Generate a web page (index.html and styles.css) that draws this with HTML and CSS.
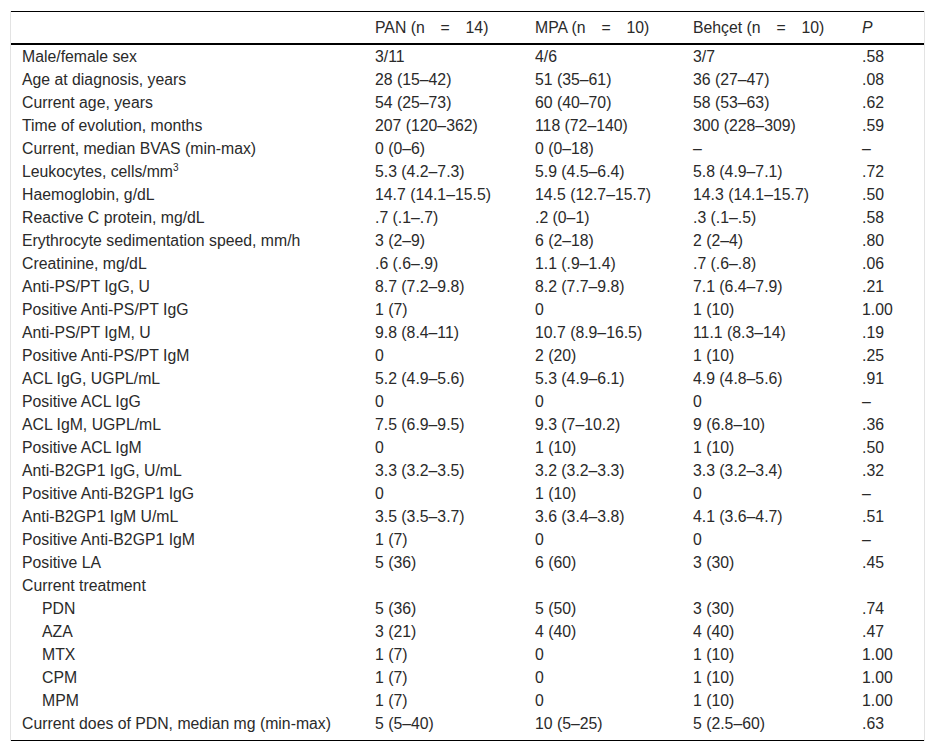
FILE: index.html
```html
<!DOCTYPE html>
<html>
<head>
<meta charset="utf-8">
<link rel="stylesheet" href="styles.css">
</head>
<body>
<div class="wrap">
<table class="data">
<thead>
<tr>
<th class="c-label"></th>
<th class="c-pan">PAN (n&emsp;=&emsp;14)</th>
<th class="c-mpa">MPA (n&emsp;=&emsp;10)</th>
<th class="c-beh">Behçet (n&emsp;=&emsp;10)</th>
<th class="c-p"><i>P</i></th>
</tr>
</thead>
<tbody>
<tr><td>Male/female sex</td><td>3/11</td><td>4/6</td><td>3/7</td><td>.58</td></tr>
<tr><td>Age at diagnosis, years</td><td>28 (15–42)</td><td>51 (35–61)</td><td>36 (27–47)</td><td>.08</td></tr>
<tr><td>Current age, years</td><td>54 (25–73)</td><td>60 (40–70)</td><td>58 (53–63)</td><td>.62</td></tr>
<tr><td>Time of evolution, months</td><td>207 (120–362)</td><td>118 (72–140)</td><td>300 (228–309)</td><td>.59</td></tr>
<tr><td>Current, median BVAS (min-max)</td><td>0 (0–6)</td><td>0 (0–18)</td><td>–</td><td>–</td></tr>
<tr><td>Leukocytes, cells/mm<sup>3</sup></td><td>5.3 (4.2–7.3)</td><td>5.9 (4.5–6.4)</td><td>5.8 (4.9–7.1)</td><td>.72</td></tr>
<tr><td>Haemoglobin, g/dL</td><td>14.7 (14.1–15.5)</td><td>14.5 (12.7–15.7)</td><td>14.3 (14.1–15.7)</td><td>.50</td></tr>
<tr><td>Reactive C protein, mg/dL</td><td>.7 (.1–.7)</td><td>.2 (0–1)</td><td>.3 (.1–.5)</td><td>.58</td></tr>
<tr><td>Erythrocyte sedimentation speed, mm/h</td><td>3 (2–9)</td><td>6 (2–18)</td><td>2 (2–4)</td><td>.80</td></tr>
<tr><td>Creatinine, mg/dL</td><td>.6 (.6–.9)</td><td>1.1 (.9–1.4)</td><td>.7 (.6–.8)</td><td>.06</td></tr>
<tr><td>Anti-PS/PT IgG, U</td><td>8.7 (7.2–9.8)</td><td>8.2 (7.7–9.8)</td><td>7.1 (6.4–7.9)</td><td>.21</td></tr>
<tr><td>Positive Anti-PS/PT IgG</td><td>1 (7)</td><td>0</td><td>1 (10)</td><td>1.00</td></tr>
<tr><td>Anti-PS/PT IgM, U</td><td>9.8 (8.4–11)</td><td>10.7 (8.9–16.5)</td><td>11.1 (8.3–14)</td><td>.19</td></tr>
<tr><td>Positive Anti-PS/PT IgM</td><td>0</td><td>2 (20)</td><td>1 (10)</td><td>.25</td></tr>
<tr><td>ACL IgG, UGPL/mL</td><td>5.2 (4.9–5.6)</td><td>5.3 (4.9–6.1)</td><td>4.9 (4.8–5.6)</td><td>.91</td></tr>
<tr><td>Positive ACL IgG</td><td>0</td><td>0</td><td>0</td><td>–</td></tr>
<tr><td>ACL IgM, UGPL/mL</td><td>7.5 (6.9–9.5)</td><td>9.3 (7–10.2)</td><td>9 (6.8–10)</td><td>.36</td></tr>
<tr><td>Positive ACL IgM</td><td>0</td><td>1 (10)</td><td>1 (10)</td><td>.50</td></tr>
<tr><td>Anti-B2GP1 IgG, U/mL</td><td>3.3 (3.2–3.5)</td><td>3.2 (3.2–3.3)</td><td>3.3 (3.2–3.4)</td><td>.32</td></tr>
<tr><td>Positive Anti-B2GP1 IgG</td><td>0</td><td>1 (10)</td><td>0</td><td>–</td></tr>
<tr><td>Anti-B2GP1 IgM U/mL</td><td>3.5 (3.5–3.7)</td><td>3.6 (3.4–3.8)</td><td>4.1 (3.6–4.7)</td><td>.51</td></tr>
<tr><td>Positive Anti-B2GP1 IgM</td><td>1 (7)</td><td>0</td><td>0</td><td>–</td></tr>
<tr><td>Positive LA</td><td>5 (36)</td><td>6 (60)</td><td>3 (30)</td><td>.45</td></tr>
<tr><td>Current treatment</td><td></td><td></td><td></td><td></td></tr>
<tr><td class="sub">PDN</td><td>5 (36)</td><td>5 (50)</td><td>3 (30)</td><td>.74</td></tr>
<tr><td class="sub">AZA</td><td>3 (21)</td><td>4 (40)</td><td>4 (40)</td><td>.47</td></tr>
<tr><td class="sub">MTX</td><td>1 (7)</td><td>0</td><td>1 (10)</td><td>1.00</td></tr>
<tr><td class="sub">CPM</td><td>1 (7)</td><td>0</td><td>1 (10)</td><td>1.00</td></tr>
<tr><td class="sub">MPM</td><td>1 (7)</td><td>0</td><td>1 (10)</td><td>1.00</td></tr>
<tr class="last"><td>Current does of PDN, median mg (min-max)</td><td>5 (5–40)</td><td>10 (5–25)</td><td>5 (2.5–60)</td><td>.63</td></tr>
</tbody>
</table>
</div>
</body>
</html>
```

FILE: styles.css
```css
html, body {
  margin: 0;
  padding: 0;
  background: #ffffff;
}

body {
  font-family: "Liberation Sans", Arial, sans-serif;
  font-size: 15.8px;
  color: #2a2a2a;
}

.wrap {
  box-sizing: border-box;
  width: 915px;
  margin: 11px 0 0 10px;
  border-left: 1px solid #e3e3e3;
  border-right: 1px solid #e3e3e3;
}

.data {
  width: 913px;
  border-collapse: collapse;
  table-layout: fixed;
  border-top: 1px solid #000;
  border-bottom: 1px solid #000;
}

.data th {
  font-weight: normal;
  text-align: left;
  height: 31px;
  padding: 0 0 0 11px;
  line-height: 31px;
  border-bottom: 2px solid #000;
  white-space: nowrap;
}

.data td {
  height: 23px;
  padding: 0 0 0 11px;
  line-height: 23px;
  white-space: nowrap;
  vertical-align: middle;
}

.data .last td {
  padding-bottom: 5px;
  vertical-align: top;
}

.c-label { width: 342px; }
.c-pan { width: 149px; }
.c-mpa { width: 147px; }
.c-beh { width: 158px; }
.c-p { width: 62px; }

.data td.sub {
  padding-left: 31px;
}

.data sup {
  font-size: 10px;
  line-height: 0;
  vertical-align: 6px;
}
```
